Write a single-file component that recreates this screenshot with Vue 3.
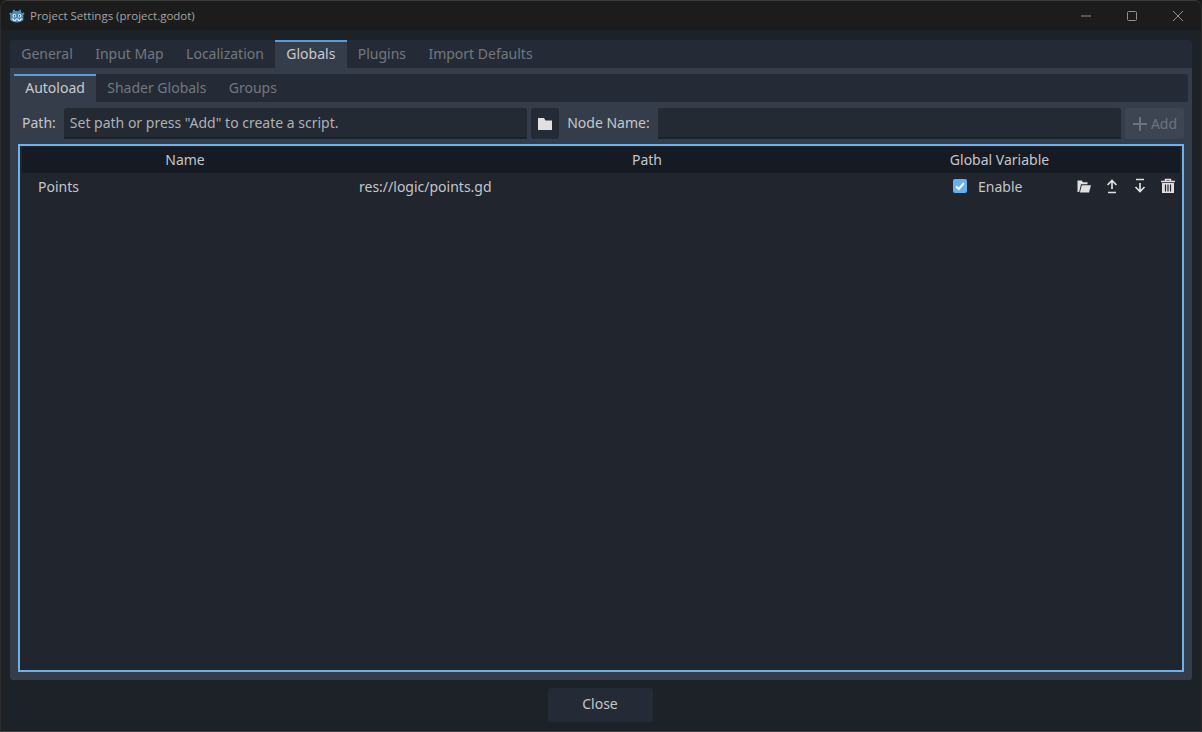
<script setup>
const mainTabs = ["General", "Input Map", "Localization", "Globals", "Plugins", "Import Defaults"];
const subTabs = ["Autoload", "Shader Globals", "Groups"];
</script>

<template>
  <div class="window">
    <div class="titlebar">
      <svg class="logo" viewBox="0 0 16 16" width="16" height="16">
        <path d="M5.200 1.400 6.400 3h3.200l1.200-1.600 1.500.7-.4 1.900 1.300 1.100 1.600-.5.700 1.400-1.100 1V12c-1.500 1.600-3.500 2.400-6.400 2.400S2.700 13.600 1.200 12V7l-1-1 .7-1.400 1.600.5L3.800 4l-.1-1.900z" fill="#478cbf"/>
        <circle cx="5.300" cy="7.800" r="1.700" fill="#fff"/>
        <circle cx="10.700" cy="7.800" r="1.700" fill="#fff"/>
        <circle cx="5.500" cy="7.900" r=".8" fill="#333"/>
        <circle cx="10.500" cy="7.900" r=".8" fill="#333"/>
        <path d="M2.500 11h2v1.500h2.300V11h2.400v1.500h2.300V11h2" fill="none" stroke="#fff" stroke-width=".9"/>
      </svg>
      <span class="title">Project Settings (project.godot)</span>
      <div class="controls">
        <svg viewBox="0 0 12 12" width="12" height="12"><path d="M1 6h10" stroke="#8f8f8f" fill="none"/></svg>
        <svg viewBox="0 0 12 12" width="12" height="12"><rect x="1.500" y="1.500" width="9" height="9" rx="1" stroke="#8f8f8f" fill="none"/></svg>
        <svg viewBox="0 0 12 12" width="12" height="12"><path d="M1 1l10 10M11 1 1 11" stroke="#8f8f8f" fill="none"/></svg>
      </div>
    </div>

    <div class="body">
      <div class="panel">
        <div class="tabs main-tabs">
          <div v-for="t in mainTabs" :key="t" class="tab" :class="{active: t === 'Globals'}">{{ t }}</div>
        </div>
        <div class="panel-content">
          <div class="tabs sub-tabs">
            <div v-for="t in subTabs" :key="t" class="tab" :class="{active: t === 'Autoload'}">{{ t }}</div>
          </div>
          <div class="sub-content">
            <div class="path-row">
              <span class="label">Path:</span>
              <div class="input grow">Set path or press "Add" to create a script.</div>
              <button class="icon-btn">
                <svg viewBox="0 0 16 16" width="16" height="16"><path d="M1 2h6l1.500 2.500H15V14H1z" fill="#e0e0e0"/></svg>
              </button>
              <span class="label node-label">Node Name:</span>
              <div class="input grow"></div>
              <button class="add-btn">
                <svg viewBox="0 0 16 16" width="16" height="16"><path d="M8 1v14M1 8h14" stroke="#6d727c" stroke-width="2" fill="none"/></svg>
                <span>Add</span>
              </button>
            </div>

            <div class="tree">
              <div class="tree-head">
                <div class="col-name">Name</div>
                <div class="col-path">Path</div>
                <div class="col-global">Global Variable</div>
                <div class="col-actions"></div>
              </div>
              <div class="tree-row">
                <div class="col-name cell">Points</div>
                <div class="col-path cell">res://logic/points.gd</div>
                <div class="col-global check-cell">
                  <span class="checkbox">
                    <svg viewBox="0 0 14 14" width="14" height="14"><path d="M3 7.500 5.800 10 11 4" stroke="#fff" stroke-width="2" fill="none"/></svg>
                  </span>
                  <span>Enable</span>
                </div>
                <div class="col-actions actions">
                  <svg viewBox="0 0 16 16" width="16" height="16"><path d="M1.500 14V2.500h4.200L7 4.300h4.500v1.900H5l-1.800 7.800z" fill="#e0e0e0"/><path d="M5.800 7.200h9.200L13 14.500H3.900z" fill="#e0e0e0"/></svg>
                  <svg viewBox="0 0 16 16" width="16" height="16"><path d="M3.500 7 8 2.500 12.500 7M8 3v8M4 14.500h8" stroke="#e0e0e0" stroke-width="1.700" fill="none"/></svg>
                  <svg viewBox="0 0 16 16" width="16" height="16"><path d="M3.500 9 8 13.500 12.500 9M8 13V5M4 1.500h8" stroke="#e0e0e0" stroke-width="1.700" fill="none"/></svg>
                  <svg viewBox="0 0 16 16" width="16" height="16"><path d="M1 3.500h14M5.500 3V1.500h5V3" stroke="#e0e0e0" stroke-width="1.500" fill="none"/><path d="M2 5h12v10H2z" fill="#e0e0e0"/><path d="M5.500 6.500v7M8 6.500v7M10.500 6.500v7" stroke="#20252e" stroke-width="1.200"/></svg>
                </div>
              </div>
            </div>
          </div>
        </div>
      </div>

      <div class="footer">
        <button class="close-btn">Close</button>
      </div>
    </div>
  </div>
</template>

<style>
html, body {
  margin: 0;
  background: #1a1a1a;
}
</style>

<style scoped>
.window {
  width: 1202px;
  height: 732px;
  display: flex;
  flex-direction: column;
  background: #1d2229;
  font-family: "Noto Sans", sans-serif;
  font-size: 14px;
  color: #c4c6c9;
  overflow: hidden;
  box-sizing: border-box;
  border: 1px solid #2c2c2c;
  border-top-color: #3a3a3a;
  border-bottom-color: #3f4042;
  border-radius: 8px 8px 0 0;
}

.titlebar {
  height: 29px;
  flex: none;
  display: flex;
  align-items: center;
  padding-left: 8px;
  background: #1c1c1c;
}

.logo {
  margin-right: 5px;
}

.title {
  font-family: "Open Sans", sans-serif;
  font-size: 11.5px;
  color: #a3a3a3;
}

.controls {
  margin-left: auto;
  display: flex;
  gap: 34px;
  padding-right: 17px;
}

.body {
  flex: 1;
  display: flex;
  flex-direction: column;
  padding: 10px 9px 0;
  min-height: 0;
}

.panel {
  flex: 1;
  display: flex;
  flex-direction: column;
  min-height: 0;
}

.tabs {
  display: flex;
  flex: none;
  background: #252b36;
  border-radius: 3px 3px 0 0;
}

.main-tabs {
  height: 28px;
}

.sub-tabs {
  height: 28px;
}

.tab {
  padding: 0 11.2px;
  line-height: 28px;
  color: #73777f;
  box-sizing: border-box;
  height: 28px;
}

.tab.active {
  color: #c8cacd;
  background: #363d4a;
  border-top: 2px solid #569eda;
  line-height: 24px;
}

.panel-content {
  flex: 1;
  display: flex;
  flex-direction: column;
  min-height: 0;
  background: #363d4a;
  padding: 6px 4px 8px;
  border-radius: 0 0 3px 3px;
}

.sub-content {
  flex: 1;
  display: flex;
  flex-direction: column;
  min-height: 0;
  padding: 6px 4px 0;
}

.path-row {
  display: flex;
  align-items: stretch;
  height: 31px;
  flex: none;
  gap: 4px;
  margin-bottom: 5px;
  padding-left: 4px;
}

.label {
  line-height: 30px;
  color: #c4c6c9;
  padding-right: 4px;
}

.node-label {
  padding-left: 4px;
}

.input {
  background: #242a33;
  border-bottom: 2px solid #1c2027;
  border-radius: 3px 3px 0 0;
  box-sizing: border-box;
  padding-left: 6px;
  line-height: 29px;
  color: #aeb0b5;
  flex: 1 1 0;
}

.icon-btn {
  width: 28px;
  padding: 0;
  border: 0;
  border-radius: 3px;
  background: #252b36;
  display: flex;
  align-items: center;
  justify-content: center;
}

.add-btn {
  width: 59px;
  padding: 0;
  border: 0;
  border-radius: 3px;
  background: #3e4552;
  color: #6d727c;
  font: inherit;
  display: flex;
  align-items: center;
  justify-content: center;
  gap: 3px;
}

.tree {
  flex: 1;
  min-height: 0;
  background: #20252e;
  border: 2px solid #6cb2ee;
  box-sizing: border-box;
  padding: 1px 2px 2px;
}

.tree-head {
  height: 26px;
  box-sizing: border-box;
  padding-bottom: 2px;
  display: flex;
  align-items: center;
  background: #161a22;
  border-radius: 2px;
  text-align: center;
  color: #c4c6c9;
}

.tree-row {
  height: 26px;
  display: flex;
  align-items: center;
}

.col-name {
  width: 326px;
  flex: none;
}

.col-path {
  width: 598px;
  flex: none;
}

.col-global {
  width: 107px;
  flex: none;
  white-space: nowrap;
}

.col-actions {
  flex: 1;
}

.cell {
  text-align: left;
  box-sizing: border-box;
}

.col-name.cell {
  padding-left: 16px;
}

.col-path.cell {
  padding-left: 11px;
}

.check-cell {
  display: flex;
  align-items: center;
  gap: 11px;
  padding-left: 7px;
  box-sizing: border-box;
}

.checkbox {
  width: 14px;
  height: 14px;
  border-radius: 2px;
  background: #66b0f0;
  display: flex;
}

.actions {
  display: flex;
  gap: 12px;
  justify-content: flex-end;
  padding-right: 4px;
}

.footer {
  flex: none;
  height: 51px;
  display: flex;
  align-items: center;
  justify-content: center;
  padding-right: 2px;
}

.close-btn {
  width: 105px;
  height: 34px;
  margin-top: -2px;
  padding: 0 0 2px;
  border: 0;
  border-radius: 3px;
  background: #252b36;
  color: #c4c6c9;
  font: inherit;
}
</style>
